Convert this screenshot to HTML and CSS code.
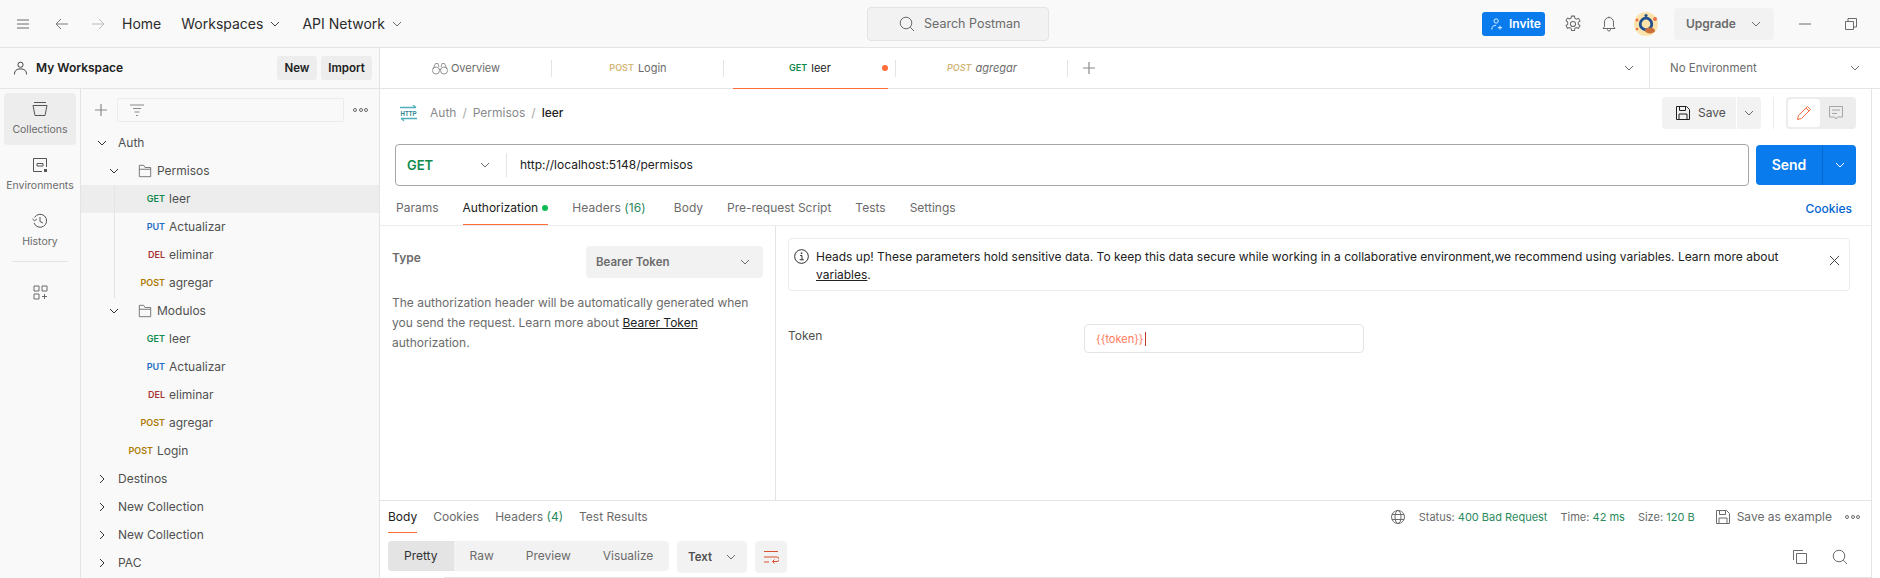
FILE: index.html
```html
<!DOCTYPE html>
<html lang="en">
<head>
<meta charset="utf-8">
<title>Postman</title>
<link rel="stylesheet" href="styles.css">
</head>
<body>
<svg class="sprite" width="0" height="0" aria-hidden="true">
  <symbol id="down" viewBox="0 0 12 12"><path d="M2 4l4 4 4-4" fill="none" stroke="currentColor" stroke-width="1"/></symbol>
  <symbol id="right" viewBox="0 0 12 12"><path d="M4 2l4 4-4 4" fill="none" stroke="currentColor" stroke-width="1"/></symbol>
  <symbol id="folder" viewBox="0 0 16 16"><path d="M1.500 14.500v-13h5l1.500 2.500h6.500v10.500zM1.500 6h13" fill="none" stroke="currentColor"/></symbol>
  <symbol id="disk" viewBox="0 0 16 16"><path d="M1.500 1.500h10l3 3v10h-13zM4.500 1.500v4h6v-4M4 14.500v-5.500h8v5.500" fill="none" stroke="currentColor"/></symbol>
  <symbol id="search" viewBox="0 0 16 16"><circle cx="7" cy="7" r="5.800" fill="none" stroke="currentColor"/><path d="M11.200 11.200l3.800 3.800" stroke="currentColor"/></symbol>
</svg>

<div class="app">
  <header class="top">
    <svg class="ic hamb" viewBox="0 0 12 10"><path d="M0 1h12M0 5h12M0 9h12" stroke="currentColor"/></svg>
    <svg class="ic back" viewBox="0 0 14 12"><path d="M13 6H1M6 1L1 6l5 5" fill="none" stroke="currentColor"/></svg>
    <svg class="ic fwd" viewBox="0 0 14 12"><path d="M1 6h12M8 1l5 5-5 5" fill="none" stroke="currentColor"/></svg>
    <span class="nav home">Home</span>
    <span class="nav ws">Workspaces</span><svg class="chev wsc"><use href="#down"/></svg>
    <span class="nav api">API Network</span><svg class="chev apic"><use href="#down"/></svg>
    <div class="search"><svg class="srch"><use href="#search"/></svg><span>Search Postman</span></div>
    <div class="top-right">
      <button class="invite"><svg class="inv-ic" viewBox="0 0 14 14"><circle cx="6" cy="3.500" r="2.500" fill="none" stroke="#fff"/><path d="M1 13.500c0-3.500 1.500-5 5-5M10.500 9v4.500M8 11.300h5" fill="none" stroke="#fff"/></svg>Invite</button>
      <svg class="ic gear" viewBox="1 0 14 16"><path d="M6.700 1h2.600l.4 2 1.300.7 1.900-.7 1.300 2.300-1.500 1.300v1.600l1.500 1.300-1.300 2.300-1.900-.7-1.300.7-.4 2H6.700l-.4-2-1.300-.7-1.900.7-1.300-2.300 1.500-1.300V6.300L1.800 5l1.300-2.300 1.900.7 1.300-.7z" fill="none" stroke="currentColor" stroke-width=".9"/><circle cx="8" cy="8" r="2.300" fill="none" stroke="currentColor" stroke-width=".9"/></svg>
      <svg class="ic bell" viewBox="0 0 14 16"><path d="M1 12.500h12l-1.500-2V6a4.500 4.500 0 0 0-9 0v4.500zM5.500 12.500v1a1.500 1.500 0 0 0 3 0v-1M7 1.500V.5" fill="none" stroke="currentColor"/></svg>
      <svg class="avatar" viewBox="0 0 24 24"><circle cx="12" cy="12" r="12" fill="#fbe3ab"/><circle cx="3" cy="8" r="1.500" fill="#f0714a"/><circle cx="21" cy="7" r="2" fill="#f0714a"/><circle cx="3" cy="17" r="1.300" fill="#f0714a"/><circle cx="12" cy="12" r="5.800" fill="none" stroke="#1f4f8f" stroke-width="2.800"/><circle cx="12" cy="3.500" r="1.600" fill="#1f4f8f"/><ellipse cx="16" cy="18.500" rx="5" ry="3" fill="#c9703a"/></svg>
      <div class="upgrade"><span>Upgrade</span><svg class="chev"><use href="#down"/></svg></div>
      <svg class="ic win-min" viewBox="0 0 12 2"><path d="M0 1h12" stroke="currentColor"/></svg>
      <svg class="ic win-max" viewBox="0 0 12 12"><path d="M.5 3.500h8v8h-8zM3 3.500V.5h8.500V9H8.500" fill="none" stroke="currentColor"/></svg>
    </div>
  </header>

  <div class="body">
    <aside class="side">
      <div class="ws-head">
        <svg class="ic person" viewBox="0 0 14 14"><circle cx="7" cy="3.500" r="2.800" fill="none" stroke="currentColor"/><path d="M.5 14c0-4 2-6 6.500-6s6.500 2 6.500 6" fill="none" stroke="currentColor"/></svg>
        <span class="ws-name">My Workspace</span>
        <button class="btn-new">New</button>
        <button class="btn-import">Import</button>
      </div>
      <div class="side-body">
        <nav class="rail">
          <div class="rail-item active">
            <svg class="rail-ic" viewBox="0 0 16 16"><path d="M2 1.500h12M1 4.500h14L13 14.500H3z" fill="none" stroke="currentColor"/></svg>
            <span>Collections</span>
          </div>
          <div class="rail-item">
            <svg class="rail-ic" viewBox="0 0 16 16"><path d="M14.500 10V1.500h-13v13H10" fill="none" stroke="currentColor"/><path d="M5 6.500h6v2.500H5z" fill="none" stroke="currentColor"/><rect x="12" y="12" width="3" height="3" fill="currentColor"/></svg>
            <span>Environments</span>
          </div>
          <div class="rail-item">
            <svg class="rail-ic" viewBox="0 0 16 16"><path d="M2.500 4.500A6.500 6.500 0 1 1 2 10M.5 6l2.200 1.800L4.800 6M8 4v4.500l3 1.500" fill="none" stroke="currentColor"/></svg>
            <span>History</span>
          </div>
          <hr class="rail-sep">
          <svg class="rail-ic apps" viewBox="0 0 15 15"><path d="M1 1h5v5H1zM9 1h5v5H9zM1 9h5v5H1zM11.500 9v5M9 11.500h5" fill="none" stroke="currentColor"/></svg>
        </nav>
        <div class="tree">
          <div class="tree-tools">
            <svg class="ic plus" viewBox="0 0 12 12"><path d="M6 0v12M0 6h12" stroke="currentColor" stroke-width="1.200"/></svg>
            <div class="filter"><svg class="filter-ic" viewBox="0 0 14 12"><path d="M0 1h14M3 4.500h8M4.500 8h5M6 11.500h2" stroke="currentColor"/></svg></div>
            <span class="dots"><i></i><i></i><i></i></span>
          </div>
          <div class="row l0"><svg class="chev"><use href="#down"/></svg><span>Auth</span></div>
          <div class="row l1"><svg class="chev"><use href="#down"/></svg><svg class="folder"><use href="#folder"/></svg><span>Permisos</span></div>
          <div class="row req sel"><b class="m get">GET</b><span>leer</span></div>
          <div class="row req"><b class="m put">PUT</b><span>Actualizar</span></div>
          <div class="row req"><b class="m del">DEL</b><span>eliminar</span></div>
          <div class="row req"><b class="m post">POST</b><span>agregar</span></div>
          <div class="row l1"><svg class="chev"><use href="#down"/></svg><svg class="folder"><use href="#folder"/></svg><span>Modulos</span></div>
          <div class="row req"><b class="m get">GET</b><span>leer</span></div>
          <div class="row req"><b class="m put">PUT</b><span>Actualizar</span></div>
          <div class="row req"><b class="m del">DEL</b><span>eliminar</span></div>
          <div class="row req"><b class="m post">POST</b><span>agregar</span></div>
          <div class="row req top-req"><b class="m post">POST</b><span>Login</span></div>
          <div class="row l0"><svg class="chev"><use href="#right"/></svg><span>Destinos</span></div>
          <div class="row l0"><svg class="chev"><use href="#right"/></svg><span>New Collection</span></div>
          <div class="row l0"><svg class="chev"><use href="#right"/></svg><span>New Collection</span></div>
          <div class="row l0"><svg class="chev"><use href="#right"/></svg><span>PAC</span></div>
          <span class="tree-line"></span>
        </div>
      </div>
    </aside>

    <main class="main">
      <div class="tabbar">
        <div class="tab"><svg class="ic bino" viewBox="0 0 16 13"><circle cx="4" cy="8.500" r="3.500" fill="none" stroke="currentColor" stroke-width=".9"/><circle cx="12" cy="8.500" r="3.500" fill="none" stroke="currentColor" stroke-width=".9"/><path d="M1 7l2.500-5.500h2.500L7 5M15 7l-2.500-5.500H10L9 5M7 7.500h2" fill="none" stroke="currentColor" stroke-width=".9"/></svg><span>Overview</span></div>
        <div class="tab"><b class="m post faded">POST</b><span>Login</span></div>
        <div class="tab active"><b class="m get">GET</b><span>leer</span><i class="dirty"></i></div>
        <div class="tab ital"><b class="m post faded">POST</b><span>agregar</span></div>
        <svg class="ic tab-plus" viewBox="0 0 12 12"><path d="M6 0v12M0 6h12" stroke="currentColor" stroke-width="1.200"/></svg>
        <svg class="chev tab-more"><use href="#down"/></svg>
        <div class="env"><span>No Environment</span><svg class="chev"><use href="#down"/></svg></div>
      </div>

      <div class="content">
        <div class="crumbs">
          <svg class="http" viewBox="0 0 18 16"><path d="M0 2.500h16M13 .3L16 2.500M17 13.500H1M4 15.700l-3-2.200" fill="none" stroke="#4fb0bd" stroke-width="1.300"/><text x="0.500" y="11.300" textLength="16" lengthAdjust="spacingAndGlyphs" class="http-t">HTTP</text></svg>
          <span class="cr">Auth</span><span class="cr sl">/</span><span class="cr">Permisos</span><span class="cr sl">/</span><span class="cr cur">leer</span>
          <div class="crumb-actions">
            <button class="save"><svg class="disk"><use href="#disk"/></svg>Save</button>
            <button class="save-more"><svg class="chev"><use href="#down"/></svg></button>
            <span class="act-sep"></span>
            <div class="toggle">
              <span class="tog on"><svg class="ic" viewBox="0 0 16 16"><path d="M1.500 14.500l1-4L11.500 1.500l3 3-9 9zM10 3l3 3" fill="none" stroke="#f26b3a"/></svg></span>
              <span class="tog"><svg class="ic" viewBox="0 0 16 16"><path d="M1.500 1.500h13v10.500h-5L8 14l-1.500-2h-5zM4 5h8M4 8.500h5" fill="none" stroke="#a6a6a6"/></svg></span>
            </div>
          </div>
        </div>

        <div class="url-row">
          <div class="url">
            <span class="verb">GET</span><svg class="chev"><use href="#down"/></svg>
            <span class="url-text">http://localhost:5148/permisos</span>
          </div>
          <div class="send"><span class="send-l">Send</span><span class="send-r"><svg class="chev"><use href="#down"/></svg></span></div>
        </div>

        <div class="req-tabs">
          <span class="rt">Params</span>
          <span class="rt active">Authorization<i class="ok"></i></span>
          <span class="rt hdr">Headers <em>(16)</em></span>
          <span class="rt">Body</span>
          <span class="rt">Pre-request Script</span>
          <span class="rt">Tests</span>
          <span class="rt">Settings</span>
          <span class="cookies">Cookies</span>
        </div>

        <div class="auth">
          <div class="auth-left">
            <div class="type-row">
              <span class="type-l">Type</span>
              <div class="select"><span>Bearer Token</span><svg class="chev"><use href="#down"/></svg></div>
            </div>
            <p class="help">The authorization header will be automatically generated when you send the request. Learn more about <u>Bearer Token</u> authorization.</p>
          </div>
          <div class="auth-right">
            <div class="notice">
              <svg class="info" viewBox="0 0 16 16"><circle cx="8" cy="8" r="7.300" fill="none" stroke="currentColor"/><path d="M6.500 7h2v4.500M6 11.500h4.500" fill="none" stroke="currentColor"/><rect x="7.300" y="3.800" width="1.500" height="1.500" fill="currentColor"/></svg>
              <p>Heads up! These parameters hold sensitive data. To keep this data secure while working in a collaborative environment,we recommend using variables. Learn more about <u>variables</u>.</p>
              <svg class="close" viewBox="0 0 12 12"><path d="M1 1l10 10M11 1L1 11" stroke="currentColor"/></svg>
            </div>
            <div class="token-row">
              <span class="token-l">Token</span>
              <div class="token-in"><span>{{token}}</span><i class="caret"></i></div>
            </div>
          </div>
        </div>

        <section class="resp">
          <div class="resp-tabs">
            <span class="pt active">Body</span>
            <span class="pt">Cookies</span>
            <span class="pt">Headers <em>(4)</em></span>
            <span class="pt">Test Results</span>
            <div class="status">
              <svg class="globe" viewBox="0 0 14 14"><circle cx="7" cy="7" r="6.500" fill="none" stroke="currentColor"/><ellipse cx="7" cy="7" rx="3" ry="6.500" fill="none" stroke="currentColor"/><path d="M1 4.500h12M1 9.500h12" stroke="currentColor"/></svg>
              <span class="st">Status: <em>400 Bad Request</em></span>
              <span class="st">Time: <em>42 ms</em></span>
              <span class="st">Size: <em>120 B</em></span>
              <svg class="disk grey"><use href="#disk"/></svg>
              <span class="st save-ex">Save as example</span>
              <span class="dots"><i></i><i></i><i></i></span>
            </div>
          </div>
          <div class="resp-tools">
            <div class="pills">
              <span class="pill on">Pretty</span><span class="pill">Raw</span><span class="pill">Preview</span><span class="pill">Visualize</span>
            </div>
            <div class="fmt"><span>Text</span><svg class="chev"><use href="#down"/></svg></div>
            <div class="wrap"><svg class="ic" viewBox="0 0 16 14"><path d="M1 1.500h14M1 7h13a2 2 0 0 1 0 4.500H9.500M11.500 9.500l-2 2 2 2M1 12h5" fill="none" stroke="#d9512c"/></svg></div>
            <svg class="ic copy" viewBox="0 0 14 14"><path d="M3.500 3.500h10v10h-10zM.5 10V.5H10" fill="none" stroke="currentColor"/></svg>
            <svg class="srch2"><use href="#search"/></svg>
          </div>
          <div class="resp-line"></div>
        </section>
      </div>
    </main>
  </div>
</div>
</body>
</html>
```

FILE: styles.css
```css
* { box-sizing: border-box; }
html, body { margin: 0; height: 100%; overflow: hidden; }
body { font: 12px/16px Inter, "Liberation Sans", sans-serif; color: #212121; background: #fff; }
.sprite { position: absolute; }
button { font: inherit; border: 0; padding: 0; }
em { font-style: normal; }
.ic { display: block; flex: none; color: #6b6b6b; }
.chev { display: block; flex: none; width: 12px; height: 12px; color: #6b6b6b; }
.app { display: flex; flex-direction: column; height: 578px; }

/* top bar */
.top { display: flex; align-items: center; height: 48px; flex: none; background: #f9f9f9; border-bottom: 1px solid #e4e4e4; color: #212121; }
.hamb { width: 12px; height: 10px; margin-left: 17px; }
.back { width: 14px; height: 12px; margin-left: 26px; color: #7a7a7a; }
.fwd { width: 14px; height: 12px; margin-left: 22px; color: #bdbdbd; }
.nav { font-size: 14px; color: #2b2b2b; }
.home { margin-left: 17px; }
.ws { margin-left: 20px; }
.wsc { margin-left: 6px; color: #444; }
.api { margin-left: 21px; }
.apic { margin-left: 6px; }
.search { display: flex; align-items: center; width: 182px; height: 34px; margin-left: 464px; background: #f2f2f2; border: 1px solid #e4e4e4; border-radius: 4px; padding-left: 31px; color: #6b6b6b; font-size: 12.500px; }
.srch { width: 16px; height: 16px; margin-right: 9px; }
.top-right { display: flex; align-items: center; margin-left: auto; }
.invite { display: flex; align-items: center; width: 63px; height: 24px; background: #097bed; color: #fff; border-radius: 3px; font-weight: 600; padding-left: 9px; }
.inv-ic { width: 12px; height: 12px; margin-right: 6px; }
.gear { width: 16px; height: 18px; margin-left: 20px; }
.bell { width: 14px; height: 16px; margin-left: 21px; }
.avatar { width: 24px; height: 24px; margin-left: 18px; display: block; }
.upgrade { display: flex; align-items: center; justify-content: space-between; width: 100px; height: 32px; margin-left: 16px; padding: 0 12px; background: #f2f2f2; border-radius: 4px; font-weight: 600; color: #6b6b6b; }
.win-min { width: 12px; height: 2px; margin-left: 25px; }
.win-max { width: 12px; height: 12px; margin-left: 34px; margin-right: 23px; color: #6b6b6b; }

/* layout */
.body { display: flex; flex: 1; min-height: 0; }
.side { width: 380px; flex: none; display: flex; flex-direction: column; border-right: 1px solid #e4e4e4; background: #f9f9f9; }
.main { flex: 1; min-width: 0; display: flex; flex-direction: column; background: #fff; }

/* workspace header */
.ws-head { display: flex; align-items: center; height: 41px; flex: none; border-bottom: 1px solid #e4e4e4; padding-left: 14px; }
.person { width: 13px; height: 14px; color: #333; }
.ws-name { font-weight: 600; margin-left: 9px; color: #212121; }
.btn-new, .btn-import { height: 24px; background: #ededed; border-radius: 3px; font-weight: 600; color: #212121; font-size: 11.500px; }
.btn-new { width: 40px; margin-left: auto; }
.btn-import { width: 51px; margin: 0 7px 0 4px; }

/* rail */
.side-body { display: flex; flex: 1; min-height: 0; }
.rail { width: 81px; flex: none; border-right: 1px solid #e4e4e4; padding: 4px 4px 0; display: flex; flex-direction: column; align-items: center; }
.rail-item { width: 72px; height: 52px; margin-bottom: 4px; display: flex; flex-direction: column; align-items: center; padding-top: 8px; border-radius: 4px; color: #6b6b6b; font-size: 10.500px; line-height: 14px; }
.rail-item span { margin-top: 6px; white-space: nowrap; }
.rail-item.active { background: #ededed; }
.rail-ic { width: 16px; height: 16px; display: block; color: #555; flex: none; }
.rail-sep { width: 56px; height: 1px; border: 0; margin: 0; background: #e4e4e4; }
.apps { width: 15px; height: 15px; margin-top: 23px; color: #6b6b6b; }

/* tree */
.tree { flex: 1; min-width: 0; position: relative; color: #505050; }
.tree-tools { display: flex; align-items: center; height: 41px; padding-top: 1px; padding-left: 14px; margin-bottom: -1px; }
.plus { width: 12px; height: 12px; color: #8a8a8a; margin-right: 10px; }
.filter { width: 227px; height: 24px; border: 1px solid #ececec; border-radius: 2px; padding: 5px 0 0 12px; }
.filter-ic { display: block; width: 14px; height: 12px; color: #8a8a8a; }
.dots { display: flex; gap: 1.500px; margin-left: 9px; }
.dots i { width: 4px; height: 4px; border: 1px solid #6b6b6b; border-radius: 50%; display: block; }
.row { display: flex; align-items: center; height: 28px; font-size: 12px; }
.row .chev { color: #333; }
.l0 { padding-left: 15px; }
.l0 .chev { margin-right: 10px; }
.l1 { padding-left: 27px; }
.l1 .chev { margin-right: 18px; }
.folder { width: 14px; height: 14px; margin-right: 5px; color: #6b6b6b; display: block; flex: none; }
.req .m { width: 84px; text-align: right; margin-right: 4px; flex: none; }
.top-req .m { width: 72px; margin-right: 4px; }
.sel { background: #ededed; }
.m { font-size: 9px; font-weight: 600; line-height: 12px; }
.get { color: #0f8a4c; }
.put { color: #1c6cc4; }
.del { color: #a83434; }
.post { color: #ad7a03; }
.faded { opacity: .55; }
.tree-line { position: absolute; left: 33px; top: 97px; width: 1px; height: 112px; background: #e4e4e4; }

/* tabs */
.tabbar { display: flex; align-items: center; height: 41px; flex: none; border-bottom: 1px solid #e4e4e4; position: relative; }
.tab { position: relative; display: flex; align-items: center; justify-content: center; width: 172px; height: 40px; color: #6b6b6b; font-size: 11px; flex: none; }
.tab::after { content: ""; position: absolute; right: 0; top: 12px; height: 17px; width: 1px; background: #e4e4e4; }
.tab .m { margin-right: 4px; }
.tab.active { color: #212121; }
.tab.active::before { content: ""; position: absolute; left: 9px; right: 8px; bottom: -1px; height: 1px; background: #ff6c37; }
.ital { font-style: italic; }
.dirty { position: absolute; right: 8px; top: 17px; width: 6px; height: 6px; border-radius: 50%; background: #ff6c37; }
.bino { width: 16px; height: 13px; margin-right: 3px; color: #8a8a8a; }
.tab-plus { width: 12px; height: 12px; margin-left: 15px; color: #8a8a8a; }
.tab-more { margin-left: auto; margin-right: 14px; }
.env { display: flex; align-items: center; justify-content: space-between; width: 231px; height: 40px; flex: none; border-left: 1px solid #e4e4e4; padding: 0 19px 0 20px; color: #6b6b6b; font-size: 11.500px; }

/* content */
.content { flex: 1; min-height: 0; display: flex; flex-direction: column; width: 1492px; border-right: 1px solid #e4e4e4; }
.crumbs { display: flex; align-items: center; height: 32px; margin: 8px 15px 15px 20px; flex: none; }
.http { width: 18px; height: 16px; display: block; margin-right: 12px; overflow: visible; }
.http-t { font: 700 7.500px "Liberation Sans", sans-serif; fill: #2f8a98; }
.cr { color: #8a8a8a; }
.sl { margin: 0 6px; color: #a6a6a6; }
.cur { color: #212121; font-weight: 500; }
.crumb-actions { display: flex; align-items: center; margin-left: auto; }
.save { display: flex; align-items: center; width: 74px; height: 32px; background: #f2f2f2; border-radius: 4px 0 0 4px; padding-left: 13px; color: #505050; }
.disk { width: 16px; height: 16px; color: #212121; margin-right: 7px; display: block; flex: none; }
.save-more { display: flex; align-items: center; justify-content: center; width: 24px; height: 32px; margin-left: 1px; background: #f2f2f2; border-radius: 0 4px 4px 0; }
.act-sep { width: 1px; height: 32px; background: #ececec; margin: 0 12px; }
.toggle { display: flex; width: 70px; height: 32px; padding: 2px; background: #ededed; border-radius: 4px; }
.tog { display: flex; align-items: center; justify-content: center; width: 32px; height: 28px; border-radius: 3px; }
.tog .ic { width: 16px; height: 16px; }
.tog.on { background: #fff; }

.url-row { display: flex; align-items: center; gap: 7px; margin: 0 15px 0 15px; flex: none; }
.url { display: flex; align-items: center; flex: 1; height: 42px; border: 1px solid #a6a6a6; border-radius: 4px; padding-left: 11px; }
.verb { width: 72px; font-size: 13px; font-weight: 600; color: #0f8a4c; }
.url .chev { margin-right: 15px; }
.url-text { height: 24px; line-height: 24px; border-left: 1px solid #e4e4e4; padding-left: 13px; color: #212121; }
.send { display: flex; width: 100px; height: 40px; background: #097bed; border-radius: 4px; color: #fff; }
.send-l { display: flex; align-items: center; justify-content: center; width: 67px; font-size: 14px; font-weight: 600; border-right: 1px solid #0769cc; }
.send-r { flex: 1; display: flex; align-items: center; justify-content: center; }
.send-r .chev { color: #fff; }

.req-tabs { display: flex; align-items: flex-start; gap: 24px; height: 34px; margin-top: 6px; padding: 0 19px 0 16px; border-bottom: 1px solid #ededed; flex: none; color: #6b6b6b; }
.rt { display: flex; align-items: center; white-space: pre; border-bottom: 1px solid transparent; height: 33px; }
.rt em { color: #2a8a5c; }
.hdr { margin-right: 4px; letter-spacing: .1px; }
.rt.active { color: #212121; border-bottom-color: #ff6c37; }
.ok { width: 6px; height: 6px; border-radius: 50%; background: #0cbb52; margin-left: 4px; }
.cookies { margin-left: auto; align-self: center; color: #0265d2; font-weight: 500; }

/* auth */
.auth { flex: 1; min-height: 0; display: flex; }
.auth-left { width: 396px; flex: none; border-right: 1px solid #e4e4e4; padding: 20px 12px 0; }
.type-row { display: flex; justify-content: space-between; align-items: flex-start; }
.type-l { font-weight: 600; color: #6b6b6b; margin-top: 4px; }
.select { display: flex; align-items: center; justify-content: space-between; width: 177px; height: 32px; background: #f2f2f2; border-radius: 4px; padding: 0 12px 0 10px; font-size: 11.500px; font-weight: 600; color: #6b6b6b; }
.help { margin: 15px 0 0; line-height: 20px; color: #6b6b6b; }
.help u { color: #212121; }
.auth-right { flex: 1; min-width: 0; padding: 12px 21px 0 12px; }
.notice { display: flex; align-items: flex-start; height: 53px; border: 1px solid #ececec; border-radius: 4px; padding: 9px 0 0 5px; color: #212121; }
.notice p { margin: 0; line-height: 18px; flex: 1; padding-right: 30px; }
.info { width: 15px; height: 15px; margin: 1px 7px 0 0; flex: none; display: block; }
.close { width: 11px; height: 11px; margin: 7px 9px 0 0; flex: none; display: block; color: #333; }
.token-row { display: flex; align-items: flex-start; margin-top: 33px; }
.token-l { width: 296px; flex: none; margin-top: 4px; color: #505050; }
.token-in { display: flex; align-items: center; width: 280px; height: 29px; border: 1px solid #e4e4e4; border-radius: 4px; padding-left: 11px; color: #ff7a5c; font-size: 11px; }
.caret { width: 1px; height: 14px; background: #c0392b; margin-left: 1px; }

/* response */
.resp { flex: none; height: 78px; border-top: 1px solid #e4e4e4; }
.resp-tabs { display: flex; height: 32px; align-items: stretch; padding: 0 11px 0 8px; color: #6b6b6b; }
.pt { display: flex; align-items: center; white-space: pre; margin-right: 16px; height: 32px; border-bottom: 1px solid transparent; }
.pt.active { color: #212121; border-bottom-color: #ff6c37; }
.pt em { color: #2a8a5c; }
.status { display: flex; align-items: center; margin-left: auto; color: #6b6b6b; font-size: 11px; }
.globe { width: 14px; height: 14px; margin-right: 14px; display: block; color: #6b6b6b; }
.st { margin-right: 13px; white-space: pre; }
.st em { color: #2a8a5c; }
.disk.grey { color: #6b6b6b; margin: 0 6px 0 7px; }
.save-ex { font-size: 12px; margin-right: 13px; }
.status .dots { margin-left: 0; }
.resp-tools { display: flex; align-items: flex-start; padding: 8px 23px 0 8px; height: 44px; }
.pills { display: flex; height: 30px; background: #f2f2f2; border-radius: 4px; width: 281px; color: #6b6b6b; }
.pill { display: flex; align-items: center; padding: 0 16px; }
.pill.on { background: #e4e4e4; color: #333; border-radius: 4px 0 0 4px; padding: 0 16px; width: 66px; }
.fmt { display: flex; align-items: center; justify-content: space-between; width: 70px; height: 32px; margin-left: 8px; padding: 0 10px 0 11px; background: #f2f2f2; border-radius: 4px; font-weight: 600; font-size: 11.500px; color: #505050; }
.wrap { display: flex; align-items: center; justify-content: center; width: 32px; height: 32px; margin-left: 8px; background: #f2f2f2; border-radius: 4px; }
.wrap .ic { width: 16px; height: 14px; }
.copy { width: 14px; height: 14px; margin: 9px 0 0 auto; }
.srch2 { display: block; width: 16px; height: 16px; margin: 8px 0 0 25px; color: #6b6b6b; }
.resp-line { height: 1px; margin-left: 64px; background: #e4e4e4; }
```
